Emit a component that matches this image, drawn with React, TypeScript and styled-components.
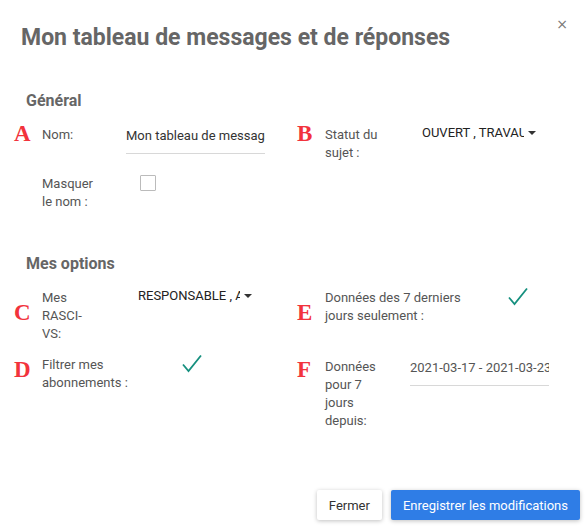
import React from "react";
import styled, { createGlobalStyle } from "styled-components";

const GlobalStyle = createGlobalStyle`
  html, body {
    margin: 0;
    padding: 0;
    background: #ffffff;
  }
  body {
    font-family: Roboto, "Liberation Sans", Arial, sans-serif;
  }
`;

const Dialog = styled.div`
  position: relative;
  width: 587px;
  height: 530px;
  box-sizing: border-box;
  padding: 25px 0 0 21px;
  background: #fff;
  overflow: hidden;
`;

const Header = styled.div`
  display: flex;
  align-items: flex-start;
  justify-content: space-between;
  padding-right: 19px;
`;

const Title = styled.h1`
  margin: 0;
  font-size: 23px;
  line-height: 26px;
  font-weight: 700;
  color: #666;
`;

const Close = styled.button`
  margin-top: -9px;
  padding: 0;
  border: none;
  background: none;
  font-family: "DejaVu Sans", sans-serif;
  font-size: 14px;
  line-height: 16px;
  color: #777;
  cursor: pointer;
`;

const Section = styled.section<{ $top: number }>`
  margin-top: ${(p) => p.$top}px;
`;

const SectionTitle = styled.h2`
  margin: 0 0 15px 5px;
  font-size: 16px;
  line-height: 20px;
  font-weight: 700;
  color: #666;
`;

const FieldGrid = styled.div`
  display: grid;
  grid-template-columns: 283px 1fr;
  row-gap: 13px;
  margin-left: 21px;
`;

const Field = styled.div<{ $top?: number }>`
  display: flex;
  align-items: flex-start;
  margin-top: ${(p) => p.$top ?? 0}px;
`;

const Label = styled.div<{ $w: number }>`
  width: ${(p) => p.$w}px;
  flex: none;
  font-size: 13px;
  line-height: 18px;
  color: #555;
`;

const Value = styled.div<{ $ml: number; $mt?: number }>`
  margin-left: ${(p) => p.$ml}px;
  margin-top: ${(p) => p.$mt ?? 0}px;
  display: flex;
  align-items: flex-start;
`;

const TextInput = styled.input<{ $color?: string }>`
  width: 139px;
  box-sizing: border-box;
  padding: 1px 0 8px;
  border: none;
  border-bottom: 1px solid #d8d8d8;
  outline: none;
  font-family: Roboto, "Liberation Sans", Arial, sans-serif;
  font-size: 13px;
  line-height: 18px;
  color: ${(p) => p.$color ?? "#333"};
  background: transparent;
`;

const Select = styled.div`
  display: flex;
  align-items: center;
  margin-top: -2px;
  font-size: 13px;
  line-height: 18px;
  color: #222;
`;

const SelectText = styled.span`
  width: 102px;
  overflow: hidden;
  white-space: nowrap;
`;

const Caret = styled.span`
  width: 0;
  height: 0;
  margin-left: 4px;
  border-left: 4px solid transparent;
  border-right: 4px solid transparent;
  border-top: 4px solid #333;
`;

const Checkbox = styled.span`
  display: block;
  width: 16px;
  height: 16px;
  box-sizing: border-box;
  border: 1px solid #bbb;
  border-radius: 1px;
`;

const Footer = styled.div`
  position: absolute;
  right: 7px;
  bottom: 10px;
  display: flex;
  gap: 9px;
`;

const Button = styled.button<{ $primary?: boolean }>`
  height: 30px;
  padding: 0 12px;
  border: none;
  border-radius: 2px;
  font-family: Roboto, "Liberation Sans", Arial, sans-serif;
  font-size: 13px;
  color: ${(p) => (p.$primary ? "#fff" : "#333")};
  background: ${(p) => (p.$primary ? "#2f7de6" : "#fff")};
  box-shadow: 0 1px 4px rgba(0, 0, 0, 0.25);
  cursor: pointer;
`;

const Marker = styled.span<{ $x: number; $y: number }>`
  position: absolute;
  left: ${(p) => p.$x}px;
  top: ${(p) => p.$y}px;
  font-family: "Liberation Serif", "Times New Roman", serif;
  font-weight: 700;
  font-size: 23px;
  line-height: 23px;
  color: #f2333c;
`;

function Check() {
  return (
    <svg width="20" height="19" viewBox="0 0 20 19" fill="none">
      <path d="M1 10.5 L6.5 17 L19 1.5" stroke="#16907f" strokeWidth="1.8" />
    </svg>
  );
}

export default function App() {
  return (
    <>
      <GlobalStyle />
      <Dialog>
        <Header>
          <Title>Mon tableau de messages et de réponses</Title>
          <Close>×</Close>
        </Header>

        <Section $top={40}>
          <SectionTitle>Général</SectionTitle>
          <FieldGrid>
            <Field>
              <Label $w={84}>Nom:</Label>
              <Value $ml={0}>
                <TextInput readOnly value="Mon tableau de messages et de réponses" />
              </Value>
            </Field>
            <Field>
              <Label $w={60}>Statut du sujet :</Label>
              <Value $ml={37}>
                <Select>
                  <SelectText>OUVERT , TRAVAUX EN COURS</SelectText>
                  <Caret />
                </Select>
              </Value>
            </Field>
            <Field>
              <Label $w={60}>Masquer le nom :</Label>
              <Value $ml={38}>
                <Checkbox />
              </Value>
            </Field>
            <div />
          </FieldGrid>
        </Section>

        <Section $top={43}>
          <SectionTitle>Mes options</SectionTitle>
          <FieldGrid>
            <Field>
              <Label $w={50}>Mes RASCI-VS:</Label>
              <Value $ml={46}>
                <Select>
                  <SelectText>RESPONSABLE , ACTEUR</SelectText>
                  <Caret />
                </Select>
              </Value>
            </Field>
            <Field>
              <Label $w={140}>Données des 7 derniers jours seulement :</Label>
              <Value $ml={43} $mt={-2}>
                <Check />
              </Value>
            </Field>
            <Field>
              <Label $w={90}>Filtrer mes abonnements :</Label>
              <Value $ml={50} $mt={-2}>
                <Check />
              </Value>
            </Field>
            <Field $top={2}>
              <Label $w={60}>Données pour 7 jours depuis:</Label>
              <Value $ml={25}>
                <TextInput readOnly $color="#555" value="2021-03-17 - 2021-03-23" />
              </Value>
            </Field>
          </FieldGrid>
        </Section>

        <Footer>
          <Button>Fermer</Button>
          <Button $primary>Enregistrer les modifications</Button>
        </Footer>

        <Marker $x={14} $y={122}>A</Marker>
        <Marker $x={297} $y={122}>B</Marker>
        <Marker $x={14} $y={301}>C</Marker>
        <Marker $x={14} $y={358}>D</Marker>
        <Marker $x={297} $y={301}>E</Marker>
        <Marker $x={297} $y={358}>F</Marker>
      </Dialog>
    </>
  );
}
